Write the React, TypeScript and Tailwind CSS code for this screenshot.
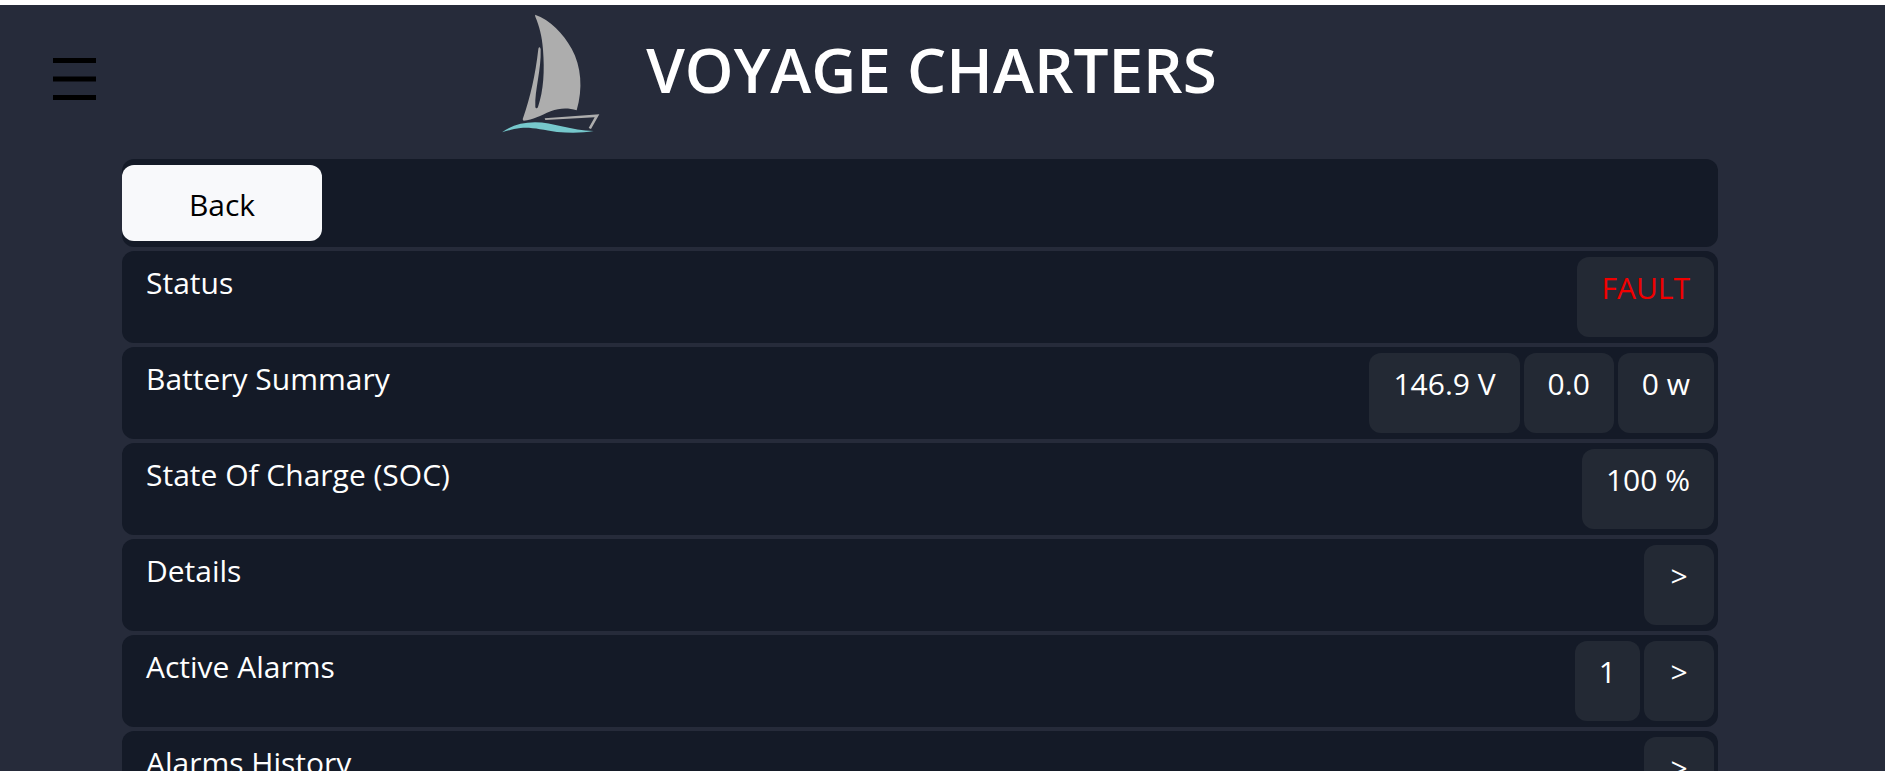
import React from "react";

type Value = { text: string; tone?: "fault" };
type Item = { label: string; values: Value[]; link?: boolean };

const items: Item[] = [
  { label: "Status", values: [{ text: "FAULT", tone: "fault" }] },
  { label: "Battery Summary", values: [{ text: "146.9 V" }, { text: "0.0" }, { text: "0 w" }] },
  { label: "State Of Charge (SOC)", values: [{ text: "100 %" }] },
  { label: "Details", values: [], link: true },
  { label: "Active Alarms", values: [{ text: "1" }], link: true },
  { label: "Alarms History", values: [], link: true },
];

function Logo() {
  return (
    <svg viewBox="60 40 300 363" className="h-[121px] w-[100px] shrink-0" aria-hidden="true">
      <path
        fill="#adadad"
        d="M165 45 C210 60 250 102 275 147 C304 199 309 267 290 332 C265 324 240 324 212 335 C181 348 159 361 131 363 C127 361 128 357 130 353 C150 295 166 228 175 148 C176 141 181 141 182 149 C184 213 164 270 166 322 C167 327 172 327 174 322 C191 271 194 214 189 150 C186 108 178 80 166 51 Z"
      />
      <path fill="#adadad" d="M194 356 L358 344 L333 388 L326 385 L344 353 L196 361 Z" />
      <path
        fill="#76c8cc"
        d="M66 398 C92 378 126 368 165 368 C219 368 274 393 341 394 C310 400 270 400 231 397 C186 391 157 382 122 385 C101 387 85 393 66 398 Z"
      />
    </svg>
  );
}

function Header() {
  return (
    <header className="flex h-[154px] items-start pr-[264px] pl-[53px]">
      <button type="button" aria-label="Open menu" className="mt-[53px] shrink-0">
        <svg viewBox="0 0 43 42" className="h-[42px] w-[43px]" fill="#000" aria-hidden="true">
          <rect x="0" y="0" width="43" height="5" />
          <rect x="0" y="18.5" width="43" height="5" />
          <rect x="0" y="37" width="43" height="5" />
        </svg>
      </button>
      <div className="flex flex-1 items-start justify-center gap-[46px] pt-2">
        <Logo />
        <h1 className="pt-3 text-[62px] leading-[88px] font-semibold whitespace-nowrap">VOYAGE CHARTERS</h1>
      </div>
    </header>
  );
}

const chip = "rounded-xl bg-[#232934] px-6 pt-2 leading-[46px] whitespace-nowrap";

function Row({ label, values, link }: Item) {
  return (
    <li className="flex h-[92px] shrink-0 justify-between rounded-xl bg-[#141a27] py-1.5 pr-1 pl-6">
      <span className="leading-[52px]">{label}</span>
      <div className="flex gap-1">
        {values.map((v) => (
          <span key={v.text} className={v.tone === "fault" ? `${chip} text-[#f00000]` : chip}>
            {v.text}
          </span>
        ))}
        {link && (
          <a href="#" aria-label={label} className={`${chip} min-w-[70px] text-center`}>
            &gt;
          </a>
        )}
      </div>
    </li>
  );
}

export default function App() {
  return (
    <div className="flex h-screen flex-col bg-white pt-[5px] pr-px pb-px">
      <div className="min-h-0 flex-1 overflow-y-auto bg-[#262b3a] font-['Open_Sans',sans-serif] text-white [scrollbar-width:none]">
        <Header />
        <main className="mr-[167px] ml-[122px] flex flex-col gap-1 text-[30px]">
          <div className="flex h-[88px] rounded-xl bg-[#141a27] py-1.5">
            <button type="button" className="w-[200px] rounded-xl bg-[#f8f9fb] pt-0.5 text-black">
              Back
            </button>
          </div>
          <ul className="flex flex-col gap-1">
            {items.map((item) => (
              <Row key={item.label} {...item} />
            ))}
          </ul>
        </main>
      </div>
    </div>
  );
}
